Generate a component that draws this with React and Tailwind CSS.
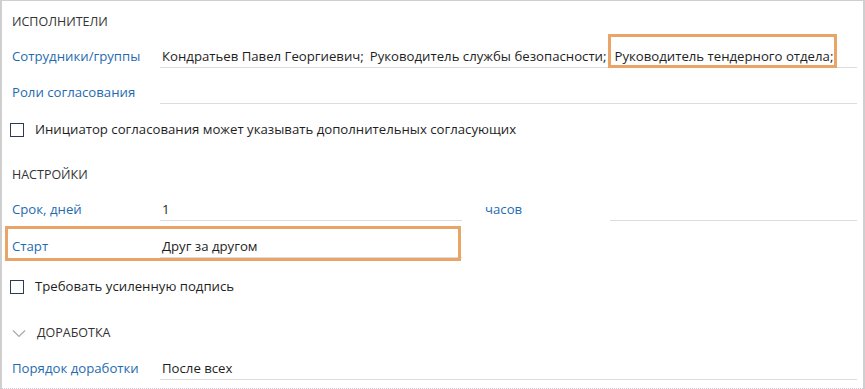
import React from 'react';

const font = { fontFamily: '"Open Sans", "Noto Sans", sans-serif' };

function Field({ label, children, className = '', inputClass = 'w-[697px]' }) {
  return (
    <div className={`flex items-center h-[22px] ${className}`}>
      <div className="w-[160px] pl-[12px] text-[#1f6bb0] whitespace-nowrap">{label}</div>
      <div className={`h-[22px] border-b border-[#dcdcdc] flex items-center pl-[2px] text-[#1e1e1e] whitespace-nowrap ${inputClass}`}>
        {children}
      </div>
    </div>
  );
}

function Check({ label, className = '' }) {
  return (
    <div className={`flex items-center h-[22px] pl-[10px] ${className}`}>
      <span className="w-[14px] h-[14px] border-[1.5px] border-[#2b3a55] bg-white" />
      <span className="ml-[11px] text-[#1e1e1e]">{label}</span>
    </div>
  );
}

function Heading({ children, className = '' }) {
  return (
    <div className={`h-[22px] flex items-center pl-[12px] text-[#333] text-[12.5px] ${className}`}>
      {children}
    </div>
  );
}

export default function App() {
  return (
    <div
      className="relative w-[865px] h-[389px] bg-white border-t border-l-2 border-r-2 border-[#cfcfcf] text-[13.2px] overflow-hidden"
      style={font}
    >
      <div className="w-[861px] flex flex-col -ml-[2px]">
        <Heading className="mt-[10px]">ИСПОЛНИТЕЛИ</Heading>

        <Field label="Сотрудники/группы" className="mt-[13px]">
          <span className="mr-[6px]">Кондратьев Павел Георгиевич;</span>
          <span className="mr-[8px]">Руководитель службы безопасности;</span>
          <span>Руководитель тендерного отдела;</span>
        </Field>

        <Field label="Роли согласования" className="mt-[14px]" />

        <Check label="Инициатор согласования может указывать дополнительных согласующих" className="mt-[15px]" />

        <Heading className="mt-[23px]">НАСТРОЙКИ</Heading>

        <div className="flex items-center mt-[13px]">
          <Field label="Срок, дней" inputClass="w-[302px]">1</Field>
          <div className="w-[148px] pl-[23px] text-[#1f6bb0]">часов</div>
          <div className="w-[247px] h-[22px] border-b border-[#dcdcdc]" />
        </div>

        <Field label="Старт" className="mt-[15px]" inputClass="w-[302px]">Друг за другом</Field>

        <Check label="Требовать усиленную подпись" className="mt-[18px]" />

        <div className="flex items-center h-[22px] mt-[24px] pl-[12px]">
          <svg width="14" height="9" viewBox="0 0 14 9" className="text-[#a8a8a8]">
            <path d="M1 1.5 L7 7.5 L13 1.5" fill="none" stroke="currentColor" strokeWidth="1.2" />
          </svg>
          <span className="ml-[11px] text-[#333] text-[12.5px]">ДОРАБОТКА</span>
        </div>

        <Field label="Порядок доработки" className="mt-[14px]">После всех</Field>
      </div>

      <div className="absolute left-0 right-0 bottom-0 border-b border-dotted border-[#d9c8d0]" />

      {/* highlight frames */}
      <div className="absolute left-[606px] top-[33px] w-[229px] h-[34px] border-[3px] border-[#e9a567]" />
      <div className="absolute left-[3px] top-[225px] w-[456px] h-[35px] border-[3px] border-[#e9a567]" />
    </div>
  );
}
